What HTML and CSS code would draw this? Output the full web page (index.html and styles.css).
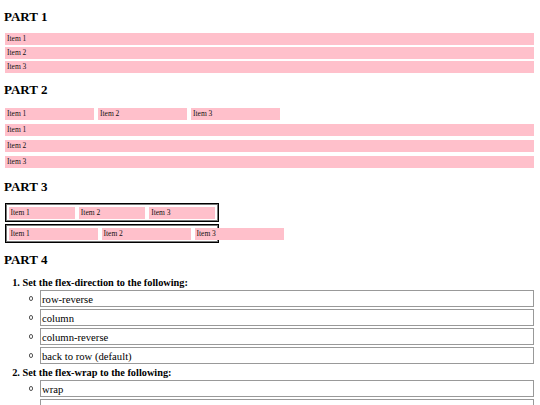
FILE: index.html
```html
<!DOCTYPE html>
<html>
<head>
<meta charset="utf-8">
<title>Flexbox Practice</title>
<link rel="stylesheet" href="styles.css">
</head>
<body>
  <h3 class="part-title">PART 1</h3>
  <div class="stack">
    <div class="item">Item 1</div>
    <div class="item">Item 2</div>
    <div class="item">Item 3</div>
  </div>

  <h3 class="part-title">PART 2</h3>
  <div class="flex-row">
    <div class="item item-fixed">Item 1</div>
    <div class="item item-fixed">Item 2</div>
    <div class="item item-fixed">Item 3</div>
  </div>
  <div class="flex-col">
    <div class="item">Item 1</div>
    <div class="item">Item 2</div>
    <div class="item">Item 3</div>
  </div>

  <h3 class="part-title">PART 3</h3>
  <div class="box">
    <div class="item item-fixed">Item 1</div>
    <div class="item item-fixed">Item 2</div>
    <div class="item item-fixed">Item 3</div>
  </div>
  <div class="box box-noshrink">
    <div class="item item-fixed">Item 1</div>
    <div class="item item-fixed">Item 2</div>
    <div class="item item-fixed">Item 3</div>
  </div>

  <h3 class="part-title">PART 4</h3>
  <ol class="tasks">
    <li class="task">Set the flex-direction to the following:
      <ul class="options">
        <li class="option"><div class="option-box">row-reverse</div></li>
        <li class="option"><div class="option-box">column</div></li>
        <li class="option"><div class="option-box">column-reverse</div></li>
        <li class="option"><div class="option-box">back to row (default)</div></li>
      </ul>
    </li>
    <li class="task">Set the flex-wrap to the following:
      <ul class="options">
        <li class="option"><div class="option-box">wrap</div></li>
        <li class="option"><div class="option-box">wrap-reverse</div></li>
        <li class="option"><div class="option-box">back to nowrap (default)</div></li>
      </ul>
    </li>
  </ol>
</body>
</html>
```
FILE: styles.css
```css
html, body {
  background: #ffffff;
}

body {
  margin: 0 4px 0 3px;
  font-family: "Liberation Serif", "Times New Roman", serif;
  color: #000;
}

.part-title {
  font-size: 13px;
  line-height: 14px;
  font-weight: bold;
  margin: 10px 0 9px 1px;
}

.item {
  background: #ffc0cb;
  font-size: 7.5px;
  line-height: 8px;
  padding: 2px 2px;
  margin: 2px;
  color: #111;
}

.flex-row {
  display: flex;
}

.flex-col {
  display: flex;
  flex-direction: column;
}

.item-fixed {
  width: 85px;
  flex: 0 1 auto;
}

.box {
  display: flex;
  width: 211px;
  border: 1px solid #000;
  padding: 0.5px;
  box-shadow: inset 0 0 0 1px #777;
  margin: 0 0 2px 2px;
}

.box-noshrink .item-fixed {
  flex-shrink: 0;
}

.tasks {
  margin: 0;
  padding-left: 19.5px;
}

.task {
  font-size: 10.3px;
  line-height: 14px;
  font-weight: bold;
}

.options {
  margin: 0;
  padding-left: 15.5px;
  list-style: none;
}

.option {
  font-size: 10.67px;
  font-weight: normal;
  position: relative;
}

.option::before {
  content: "";
  position: absolute;
  left: -9.5px;
  top: 6.3px;
  width: 2.6px;
  height: 2.6px;
  border: 0.8px solid #555;
  border-radius: 50%;
}

.option-box {
  border: 1px solid #999;
  padding: 1.5px 1px;
  line-height: 12px;
  margin: 0 2px 2px;
}
```
